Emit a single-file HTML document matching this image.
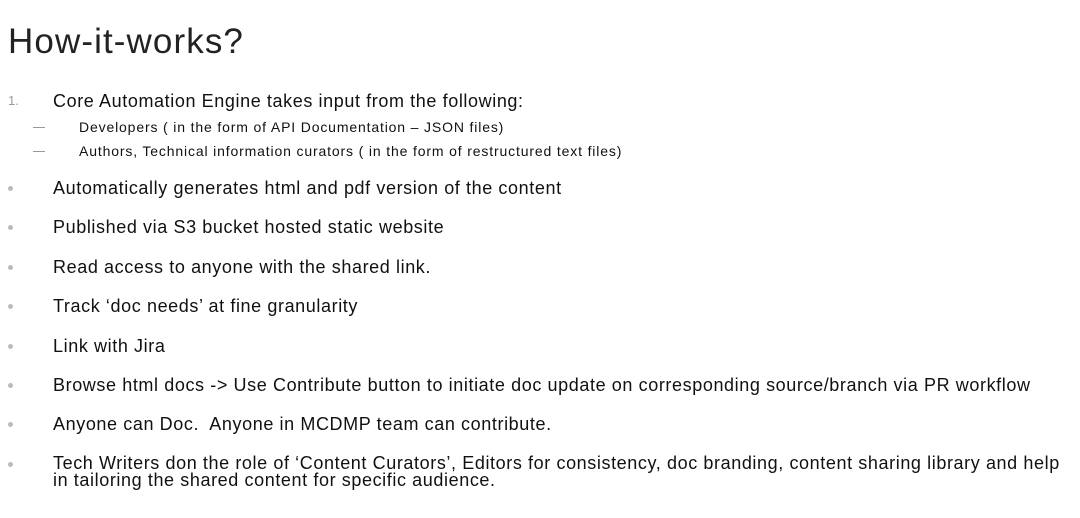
<!DOCTYPE html>
<html><head><meta charset="utf-8"><style>
body{margin:0;width:1080px;height:518px;background:#fff;position:relative;overflow:hidden;font-family:"Liberation Sans",sans-serif;color:#111}
.t{position:absolute;left:8px;top:20px;font-size:35px;line-height:44px;color:#222;letter-spacing:1.1px}
.l{position:absolute;left:53px;font-size:18px;line-height:20px;white-space:nowrap;letter-spacing:0.6px}
.s{position:absolute;left:79px;font-size:14px;line-height:16px;white-space:nowrap;letter-spacing:0.85px}
.b{position:absolute;left:8px;width:5px;height:5px;border-radius:50%;background:#bbb}
.d{position:absolute;left:33px;width:12px;height:1px;background:#999}
.n{position:absolute;left:8px;font-size:13px;color:#999;line-height:16px}
</style></head><body>
<div class="t">How-it-works?</div>
<div class="n" style="top:93px">1.</div>
<div class="l" style="top:91px">Core Automation Engine takes input from the following:</div>
<div class="d" style="top:127px"></div>
<div class="s" style="top:119px">Developers ( in the form of API Documentation – JSON files)</div>
<div class="d" style="top:151px"></div>
<div class="s" style="top:143px">Authors, Technical information curators ( in the form of restructured text files)</div>
<div class="b" style="top:186px"></div>
<div class="l" style="top:178px">Automatically generates html and pdf version of the content</div>
<div class="b" style="top:225px"></div>
<div class="l" style="top:217px">Published via S3 bucket hosted static website</div>
<div class="b" style="top:265px"></div>
<div class="l" style="top:257px">Read access to anyone with the shared link.</div>
<div class="b" style="top:304px"></div>
<div class="l" style="top:296px">Track ‘doc needs’ at fine granularity</div>
<div class="b" style="top:344px"></div>
<div class="l" style="top:336px">Link with Jira</div>
<div class="b" style="top:383px"></div>
<div class="l" style="top:375px">Browse html docs -&gt; Use Contribute button to initiate doc update on corresponding source/branch via PR workflow</div>
<div class="b" style="top:422px"></div>
<div class="l" style="top:414px">Anyone can Doc.&nbsp; Anyone in MCDMP team can contribute.</div>
<div class="b" style="top:462px"></div>
<div class="l" style="top:455px;line-height:17px">Tech Writers don the role of ‘Content Curators’, Editors for consistency, doc branding, content sharing library and help<br>in tailoring the shared content for specific audience.</div>
</body></html>
